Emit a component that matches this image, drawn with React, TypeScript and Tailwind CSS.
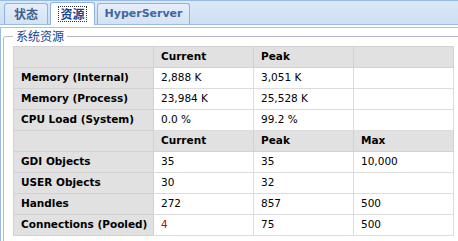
const rows1 = [
  { label: 'Memory (Internal)', current: '2,888 K', peak: '3,051 K', max: '' },
  { label: 'Memory (Process)', current: '23,984 K', peak: '25,528 K', max: '' },
  { label: 'CPU Load (System)', current: '0.0 %', peak: '99.2 %', max: '' },
];

const rows2 = [
  { label: 'GDI Objects', current: '35', peak: '35', max: '10,000' },
  { label: 'USER Objects', current: '30', peak: '32', max: '' },
  { label: 'Handles', current: '272', peak: '857', max: '500' },
  { label: 'Connections (Pooled)', current: '4', peak: '75', max: '500', alert: true },
];

function HeaderRow({ max }: { max: boolean }) {
  return (
    <tr className="h-[21px] bg-[#e1e1e1] font-bold">
      <td className="border border-[#d2d2d2]" />
      <td className="border border-[#d2d2d2] pl-[7px]">Current</td>
      <td className="border border-[#d2d2d2] pl-[7px]">Peak</td>
      <td className="border border-[#d2d2d2] pl-[7px]">{max ? 'Max' : ''}</td>
    </tr>
  );
}

type Row = { label: string; current: string; peak: string; max: string; alert?: boolean };

function DataRow({ r }: { r: Row }) {
  return (
    <tr className="h-[21px]">
      <td className="border border-[#d2d2d2] bg-[#e1e1e1] pl-[7px] font-bold">{r.label}</td>
      <td className={`border border-[#dcdcdc] pl-[7px] ${r.alert ? 'text-[#d80000]' : ''}`}>{r.current}</td>
      <td className="border border-[#dcdcdc] pl-[7px]">{r.peak}</td>
      <td className="border border-[#dcdcdc] pl-[7px]">{r.max}</td>
    </tr>
  );
}

export default function App() {
  return (
    <div className="w-[458px] h-[241px] overflow-hidden bg-white font-['DejaVu_Sans',sans-serif] text-[10.5px] text-black">
      <div className="h-[25px] border-y border-[#99bbe8] bg-gradient-to-b from-[#dce8f6] to-[#cddff5] flex items-end gap-[2px] pl-[4px]">
        <div className="h-[21px] w-[44px] rounded-t-[3px] border border-b-0 border-[#8db2e3] bg-gradient-to-b from-[#e6eef9] to-[#d4e2f4] flex items-center justify-center font-bold text-[#3f5f8f] text-[12px] font-['Noto_Sans_CJK_SC',sans-serif]">
          状态
        </div>
        <div className="relative h-[23px] -mb-px w-[45px] rounded-t-[3px] border border-b-0 border-[#8db2e3] bg-white flex items-center justify-center font-bold text-[#15428b] text-[12px] font-['Noto_Sans_CJK_SC',sans-serif]">
          <span className="border border-dotted border-[#333] leading-[14px] px-px">资源</span>
        </div>
        <div className="h-[21px] w-[93px] rounded-t-[3px] border border-b-0 border-[#8db2e3] bg-gradient-to-b from-[#e6eef9] to-[#d4e2f4] flex items-center justify-center font-bold text-[#3f68a0] text-[11px]">
          HyperServer
        </div>
      </div>
      <div className="h-[3px] border-b border-[#a9c4e8]" />
      <div className="border-l border-[#99bbe8] h-[213px]">
        <fieldset className="ml-[2px] px-[9px] pt-[2px] border border-[#b5b8c8] rounded-[3px] h-[230px]">
          <legend className="px-[3px] text-[12px] leading-[16px] text-[#15428b] font-['Noto_Sans_CJK_SC',sans-serif]">
            系统资源
          </legend>
          <table className="w-[440px] table-fixed border-collapse border border-[#c8c8c8]">
            <colgroup>
              <col className="w-[140px]" />
              <col className="w-[100px]" />
              <col className="w-[100px]" />
              <col className="w-[100px]" />
            </colgroup>
            <tbody>
              <HeaderRow max={false} />
              {rows1.map((r) => (
                <DataRow key={r.label} r={r} />
              ))}
              <HeaderRow max />
              {rows2.map((r) => (
                <DataRow key={r.label} r={r} />
              ))}
            </tbody>
          </table>
        </fieldset>
      </div>
    </div>
  );
}
